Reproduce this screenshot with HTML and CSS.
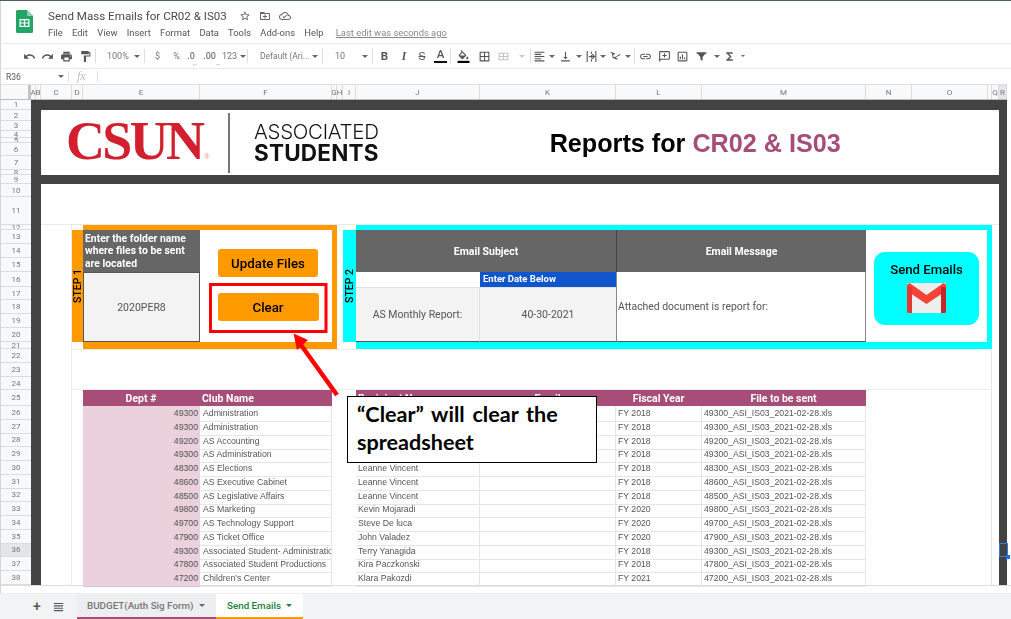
FILE: index.html
```html
<!DOCTYPE html>
<html lang="en">
<head>
<meta charset="utf-8">
<title>Send Mass Emails for CR02 &amp; IS03</title>
<link rel="stylesheet" href="styles.css">
</head>
<body>
<div class="app">
  <header class="titlebar">
    <svg class="sheets-logo" viewBox="0 0 17 23"><path fill="#23a566" d="M1.5 0H11l6 6v15.500a1.500 1.500 0 0 1-1.500 1.500h-14A1.500 1.500 0 0 1 0 21.500v-20A1.500 1.500 0 0 1 1.500 0z"/><path fill="#8ed1b1" d="M11 0l6 6h-6z"/><path fill="#fff" d="M3.500 9h10v8h-10zM4.700 10.200v2.200h3.200v-2.200zm4.400 0v2.200h3.200v-2.200zm-4.400 3.400v2.200h3.200v-2.200zm4.400 0v2.200h3.200v-2.200z" fill-rule="evenodd"/></svg>
    <div class="doc">
      <div class="doc-title">
        <span class="doc-name">Send Mass Emails for CR02 &amp; IS03</span>
        <svg class="ti star" viewBox="0 0 24 24"><path d="M22 9.240l-7.190-.62L12 2 9.190 8.630 2 9.240l5.460 4.730L5.820 21 12 17.270 18.180 21l-1.630-7.030L22 9.240zM12 15.400l-3.760 2.270 1-4.280-3.320-2.880 4.380-.38L12 6.100l1.710 4.040 4.380.38-3.320 2.880 1 4.280L12 15.400z"/></svg>
        <svg class="ti" viewBox="0 0 24 24"><path d="M20 6h-8l-2-2H4c-1.100 0-2 .9-2 2v12c0 1.100.9 2 2 2h16c1.100 0 2-.9 2-2V8c0-1.100-.9-2-2-2zm0 12H4V8h16v10zM11 17h2v-3h3v-2h-3V9h-2v3H8v2h3z"/></svg>
        <svg class="ti" viewBox="0 0 24 24"><path d="M19.350 10.040C18.670 6.590 15.640 4 12 4 9.110 4 6.600 5.640 5.350 8.040 2.340 8.360 0 10.910 0 14c0 3.310 2.690 6 6 6h13c2.760 0 5-2.240 5-5 0-2.640-2.050-4.780-4.650-4.960zM19 18H6c-2.210 0-4-1.790-4-4s1.790-4 4-4h.71C7.370 7.690 9.480 6 12 6c3.040 0 5.500 2.460 5.500 5.500v.5H19c1.660 0 3 1.340 3 3s-1.340 3-3 3zm-9-1l-3-3 1.400-1.400L10 14.200l4.600-4.600L16 11z"/></svg>
      </div>
      <nav class="menu">
        <span>File</span><span>Edit</span><span>View</span><span>Insert</span><span>Format</span><span>Data</span><span>Tools</span><span>Add-ons</span><span>Help</span>
        <span class="last-edit">Last edit was seconds ago</span>
      </nav>
    </div>
  </header>

  <div class="toolbar">
    <span class="t w18 start"><svg viewBox="0 0 24 24"><path d="M12.500 8c-2.650 0-5.050.99-6.900 2.600L2 7v9h9l-3.620-3.620c1.390-1.160 3.160-1.880 5.120-1.880 3.540 0 6.550 2.310 7.600 5.500l2.370-.78C21.080 11.030 17.150 8 12.500 8z"/></svg></span>
    <span class="t w19"><svg viewBox="0 0 24 24"><path d="M18.400 10.600C16.550 8.990 14.150 8 11.500 8c-4.650 0-8.580 3.030-9.960 7.220L3.900 16c1.050-3.190 4.050-5.500 7.600-5.500 1.950 0 3.730.72 5.120 1.880L13 16h9V7l-3.600 3.600z"/></svg></span>
    <span class="t w18"><svg viewBox="0 0 24 24"><path d="M19 8H5c-1.660 0-3 1.340-3 3v6h4v4h12v-4h4v-6c0-1.660-1.340-3-3-3zm-3 11H8v-5h8v5zm3-7c-.55 0-1-.45-1-1s.45-1 1-1 1 .45 1 1-.45 1-1 1zm-1-9H6v4h12V3z"/></svg></span>
    <span class="t w20"><svg viewBox="0 0 24 24"><path d="M18 4V3c0-.55-.45-1-1-1H5c-.55 0-1 .45-1 1v4c0 .55.45 1 1 1h12c.55 0 1-.45 1-1V6h1v4H9v11c0 .55.45 1 1 1h2c.55 0 1-.45 1-1v-9h8V4h-3z"/></svg></span>
    <i class="sep"></i>
    <span class="tx zoom-box">100%</span><span class="t w15"><i class="caret"></i></span>
    <i class="sep"></i>
    <span class="tx t w23">$</span><span class="tx t w15">%</span>
    <span class="tx t w14 dec">.0<small>←</small></span><span class="tx t w23 dec">.00<small>→</small></span>
    <span class="tx t w17">123</span><span class="t w9"><i class="caret"></i></span>
    <i class="sep"></i>
    <span class="tx font-box">Default (Ari...</span><span class="t w15"><i class="caret"></i></span>
    <i class="sep"></i>
    <span class="tx size-box">10</span><span class="t w15"><i class="caret"></i></span>
    <i class="sep"></i>
    <span class="t w21 fb">B</span><span class="t w18 fi">I</span><span class="t w18 fs">S</span>
    <span class="t w19 fa">A<i class="bar"></i></span>
    <i class="sep after-a"></i>
    <span class="t w23"><svg viewBox="0 0 24 24"><path d="M16.560 8.940L7.620 0 6.210 1.410l2.380 2.380-5.150 5.150c-.59.59-.59 1.540 0 2.120l5.500 5.500c.29.29.68.44 1.060.44s.77-.15 1.060-.44l5.500-5.500c.59-.58.59-1.530 0-2.120zM5.210 10L10 5.210 14.790 10H5.210zM19 11.500s-2 2.170-2 3.500c0 1.100.9 2 2 2s2-.9 2-2c0-1.330-2-3.500-2-3.500z"/><path fill="#000" d="M1 20h22v4H1z"/></svg></span>
    <span class="t w18"><svg viewBox="0 0 24 24"><path d="M3 3v18h18V3H3zm8 16H5v-6h6v6zm0-8H5V5h6v6zm8 8h-6v-6h6v6zm0-8h-6V5h6v6z"/></svg></span>
    <span class="t w21 dim"><svg viewBox="0 0 24 24"><path d="M3 5h18v14H3zm2 2v4h6V7zm8 0v4h6V7zM5 13v4h6v-4zm8 0v4h6v-4z" fill-rule="evenodd"/></svg></span>
    <span class="t w16 dim"><i class="caret"></i></span>
    <i class="sep"></i>
    <span class="t w15"><svg viewBox="0 0 24 24"><path d="M15 15H3v2h12v-2zm0-8H3v2h12V7zM3 13h18v-2H3v2zm0 8h18v-2H3v2zM3 3v2h18V3H3z"/></svg></span><span class="t w10"><i class="caret"></i></span>
    <span class="t w17"><svg viewBox="0 0 24 24"><path d="M16 13h-3V3h-2v10H8l4 4 4-4zM4 19v2h16v-2H4z"/></svg></span><span class="t w10"><i class="caret"></i></span>
    <span class="t w14"><svg viewBox="0 0 24 24"><path d="M3 2h2v20H3zM19 2h2v20h-2zM11 3h2v4h-2zM11 9h2v6h-2zM11 17h2v4h-2zM7 11h8l-2.500-2.500L14 7l5 5-5 5-1.500-1.500L15 13H7z"/></svg></span><span class="t w10"><i class="caret"></i></span>
    <span class="t w14"><svg viewBox="0 0 24 24"><path d="M3 3l8.500 3.500-1 2L8.400 7.700 7.500 12l3 1.200L21 7v2.200L12 14l4 2-1 2L7 14.800 5 5.600 3 5z"/></svg></span><span class="t w12"><i class="caret"></i></span>
    <i class="sep"></i>
    <span class="t w19"><svg viewBox="0 0 24 24"><path d="M3.900 12c0-1.710 1.390-3.100 3.100-3.100h4V7H7c-2.760 0-5 2.240-5 5s2.240 5 5 5h4v-1.900H7c-1.710 0-3.100-1.390-3.100-3.100zM8 13h8v-2H8v2zm9-6h-4v1.900h4c1.710 0 3.100 1.390 3.100 3.100s-1.390 3.100-3.100 3.100h-4V17h4c2.760 0 5-2.240 5-5s-2.240-5-5-5z"/></svg></span>
    <span class="t w18"><svg viewBox="0 0 24 24"><path d="M20 2H4c-1.100 0-2 .9-2 2v18l4-4h14c1.100 0 2-.9 2-2V4c0-1.100-.9-2-2-2zm0 14H5.200L4 17.200V4h16zM11 6h2v3h3v2h-3v3h-2v-3H8V9h3z"/></svg></span>
    <span class="t w18"><svg viewBox="0 0 24 24"><path d="M19 3H5c-1.100 0-2 .9-2 2v14c0 1.100.9 2 2 2h14c1.100 0 2-.9 2-2V5c0-1.100-.9-2-2-2zm0 16H5V5h14zM7 12h2v5H7zm4-4h2v9h-2zm4 6h2v3h-2z"/></svg></span>
    <span class="t w21"><svg viewBox="0 0 24 24"><path d="M3 4h18v3h-2l-5 6v7l-4-2v-5L5 7H3z"/></svg></span><span class="t w9"><i class="caret"></i></span>
    <span class="t w17"><svg viewBox="0 0 24 24"><path d="M18 4H6v2l6.500 6L6 18v2h12v-3h-7l5-5-5-5h7z"/></svg></span><span class="t w9"><i class="caret small"></i></span>
  </div>

  <div class="formula">
    <span class="cell-ref">R36</span><i class="caret"></i><i class="fsep"></i><span class="fx">fx</span><i class="fsep"></i>
  </div>

  <div class="colhead">
    <span class="corner"></span>
    <span>A</span><span>B</span><span>C</span><span>D</span><span>E</span><span>F</span><span>G</span><span>H</span><span>I</span><span>J</span><span>K</span><span>L</span><span>M</span><span>N</span><span>O</span><span></span><span>Q</span><span class="on">R</span>
  </div>

  <div class="sheet">
    <div class="rowhead">
      <span>1</span><span>2</span><span>3</span><span>4</span><span>5</span><span>6</span><span>7</span><span>8</span><span>9</span><span>10</span><span>11</span><span>12</span><span>13</span><span>14</span><span>15</span><span>16</span><span>17</span><span>18</span><span>19</span><span>20</span><span>21</span><span>22</span><span>23</span><span>24</span><span>25</span><span>26</span><span>27</span><span>28</span><span>29</span><span>30</span><span>31</span><span>32</span><span>33</span><span>34</span><span>35</span><span class="on">36</span><span>37</span><span>38</span>
    </div>

    <div class="canvas">
      <div class="dark d-top"></div>
      <div class="dark d-left"></div>
      <div class="dark d-right"></div>
      <div class="dark d-band"></div>
      <div class="blank-top"></div>
      <div class="blank-side"></div>
      <div class="blank-mid"></div>

      <div class="banner">
        <div class="csun">CSUN<sup>®</sup></div>
        <i class="divider"></i>
        <div class="assoc"><span class="assoc-a">ASSOCIATED</span><span class="assoc-s">STUDENTS</span></div>
        <h1 class="report">Reports for <em>CR02 &amp; IS03</em></h1>
      </div>

      <div class="frame1"></div>
      <div class="tab1"><span>STEP 1</span></div>
      <div class="prompt">Enter the folder name where files to be sent are located</div>
      <div class="folder">2020PER8</div>
      <div class="actions">
        <button class="btn btn-update">Update Files</button>
        <button class="btn btn-clear">Clear</button>
      </div>

      <div class="frame2"></div>
      <div class="tab2"><span>STEP 2</span></div>
      <div class="head head-subject">Email Subject</div>
      <div class="head head-message">Email Message</div>
      <div class="date-gap"></div>
      <div class="date-label">Enter Date Below</div>
      <div class="gray subject">AS Monthly Report:</div>
      <div class="gray date">40-30-2021</div>
      <div class="message">Attached document is report for:</div>
      <div class="send-cell">
        <button class="send">
          <span>Send Emails</span>
          <svg class="gmail" viewBox="0 0 39 30"><path fill="#eee" d="M0 0h39v30H0z"/><path fill="#f44336" d="M0 1.500L2.500 0 19.500 12 36.500 0 39 1.500V8L19.500 21 0 8z"/><path fill="#e53935" d="M0 4h5v26H1a1 1 0 0 1-1-1z"/><path fill="#c62828" d="M34 4h5v25a1 1 0 0 1-1 1h-4z"/></svg>
        </button>
      </div>

      <div class="table">
        <div class="tr th"><span class="c">Dept #</span><span>Club Name</span><i></i><span>Recipient Name</span><span class="c">Email</span><span class="c">Fiscal Year</span><span class="c">File to be sent</span></div>
        <div class="tr"><b>49300</b><span>Administration</span><i></i><span></span><span></span><span>FY 2018</span><span>49300_ASI_IS03_2021-02-28.xls</span></div>
        <div class="tr"><b>49300</b><span>Administration</span><i></i><span></span><span></span><span>FY 2018</span><span>49300_ASI_IS03_2021-02-28.xls</span></div>
        <div class="tr"><b>49200</b><span>AS Accounting</span><i></i><span></span><span></span><span>FY 2018</span><span>49200_ASI_IS03_2021-02-28.xls</span></div>
        <div class="tr"><b>49300</b><span>AS Administration</span><i></i><span></span><span></span><span>FY 2018</span><span>49300_ASI_IS03_2021-02-28.xls</span></div>
        <div class="tr"><b>48300</b><span>AS Elections</span><i></i><span>Leanne Vincent</span><span></span><span>FY 2018</span><span>48300_ASI_IS03_2021-02-28.xls</span></div>
        <div class="tr"><b>48600</b><span>AS Executive Cabinet</span><i></i><span>Leanne Vincent</span><span></span><span>FY 2018</span><span>48600_ASI_IS03_2021-02-28.xls</span></div>
        <div class="tr"><b>48500</b><span>AS Legislative Affairs</span><i></i><span>Leanne Vincent</span><span></span><span>FY 2018</span><span>48500_ASI_IS03_2021-02-28.xls</span></div>
        <div class="tr"><b>49800</b><span>AS Marketing</span><i></i><span>Kevin Mojaradi</span><span></span><span>FY 2020</span><span>49800_ASI_IS03_2021-02-28.xls</span></div>
        <div class="tr"><b>49700</b><span>AS Technology Support</span><i></i><span>Steve De luca</span><span></span><span>FY 2020</span><span>49700_ASI_IS03_2021-02-28.xls</span></div>
        <div class="tr"><b>47900</b><span>AS Ticket Office</span><i></i><span>John Valadez</span><span></span><span>FY 2020</span><span>47900_ASI_IS03_2021-02-28.xls</span></div>
        <div class="tr"><b>49300</b><span>Associated Student- Administration</span><i></i><span>Terry Yanagida</span><span></span><span>FY 2018</span><span>49300_ASI_IS03_2021-02-28.xls</span></div>
        <div class="tr"><b>47800</b><span>Associated Student Productions</span><i></i><span>Kira Paczkonski</span><span></span><span>FY 2018</span><span>47800_ASI_IS03_2021-02-28.xls</span></div>
        <div class="tr"><b>47200</b><span>Children's Center</span><i></i><span>Klara Pakozdi</span><span></span><span>FY 2021</span><span>47200_ASI_IS03_2021-02-28.xls</span></div>
      </div>
      <div class="blank-right"></div>
    </div>
  </div>

  <div class="sheet-foot"></div>

  <footer class="tabs">
    <span class="tab-tool plus">+</span>
    <svg class="tab-tool-icon" viewBox="0 0 12 10"><path d="M1 .5h10v1.300H1zM1 3.100h10v1.300H1zM1 5.700h10V7H1zM1 8.300h10v1.300H1z"/></svg>
    <div class="tab tab-budget">BUDGET(Auth Sig Form)<i class="caret"></i></div>
    <div class="tab tab-send">Send Emails<i class="caret"></i></div>
  </footer>

  <div class="selection"></div>
  <svg class="annot" viewBox="0 0 1011 619">
    <rect x="210.500" y="284.500" width="115.500" height="47" fill="none" stroke="#f00" stroke-width="3"/>
    <path d="M301 345L337 395" stroke="#f00" stroke-width="4.500" fill="none"/>
    <path d="M293.500 333.500L308 340 297 350z" fill="#f00"/>
  </svg>
  <div class="note">“Clear” will clear the spreadsheet</div>
</div>
</body>
</html>
```
FILE: styles.css
```css
:root {
  --cols: 5px 5px 31px 11px 117px 132px 5px 6px 13px 124px 136px 86px 164px 46px 76px 4px 7px 8px;
  --rows: 10px 11px 10px 7px 5px 13px 14px 5px 9px 13px 28px 5px 14px 14px 14px 15px 13px 14px 14px 14px 7px 14px 14px 13px 16px repeat(13, 13.75px);
  --line: #e6e6e6;
}
* { box-sizing: border-box; }
html, body { margin: 0; height: 100%; overflow: hidden; background: #fff; }
body { font-family: Roboto, "Liberation Sans", sans-serif; color: #444; }
button { font-family: inherit; border: 0; padding: 0; }
.app { position: relative; width: 1011px; height: 619px; display: flex; flex-direction: column; border-top: 1px solid #4a5d66; overflow: hidden; filter: blur(.3px); }

/* title */
.titlebar { height: 42px; flex: none; display: flex; border-left: 1px solid #d5d5d5; padding: 9px 0 0 15px; }
.sheets-logo { width: 17px; height: 23px; }
.doc { margin-left: 15px; margin-top: -1px; }
.doc-title { display: flex; align-items: center; height: 17px; margin-top: -2px; }
.doc-name { font-size: 11.600px; color: #4a4a4a; width: 179px; white-space: nowrap; }
.ti { width: 12px; height: 12px; fill: #666; margin-left: 8px; }
.ti.star { margin-left: 12px; }
.menu { display: flex; font-size: 9.400px; color: #555; margin-top: 3px; line-height: 12px; }
.menu span { margin-right: 9.300px; white-space: nowrap; }
.last-edit { margin-left: 3px; text-decoration: underline; color: #888; }

/* toolbar */
.toolbar { height: 26px; flex: none; display: flex; align-items: center; border-top: 1px solid #e8e8e8; border-bottom: 1px solid #e8e8e8; border-left: 1px solid #d5d5d5; padding-left: 19px; }
.t { flex: none; display: flex; align-items: center; justify-content: center; height: 16px; }
.t svg { width: 13px; height: 13px; fill: #555; }
.w9 { width: 9px; } .w10 { width: 10px; } .w12 { width: 12px; } .w14 { width: 14px; } .w15 { width: 15px; }
.w16 { width: 16px; } .w17 { width: 17px; } .w18 { width: 18px; } .w19 { width: 19px; } .w20 { width: 20px; }
.w21 { width: 21px; } .w23 { width: 23px; }
.sep { flex: none; width: 1px; height: 14px; margin: 0 1px 0 0; background: #ddd; }
.tx { font-size: 9px; color: #777; white-space: nowrap; flex: none; }
.zoom-box { width: 32px; padding-left: 10px; }
.font-box { width: 58px; padding-left: 11px; font-size: 8.500px; }
.size-box { width: 33px; padding-left: 11px; }
.caret { display: inline-block; width: 0; height: 0; border: 3px solid transparent; border-top: 3.500px solid #666; border-bottom: 0; }
.caret.small { border-width: 2px; border-top-width: 2.500px; border-bottom: 0; }
.dec { position: relative; font-weight: 500; }
.dec small { position: absolute; font-size: 6px; bottom: -3px; right: 0; }
.fb, .fi, .fs, .fa { font-size: 11.500px; color: #555; font-weight: 700; }
.fi { font-style: italic; font-family: "Liberation Serif", serif; }
.fs { text-decoration: line-through; font-weight: 400; }
.fa { flex-direction: column; font-weight: 500; line-height: 11px; }
.bar { display: block; width: 13px; height: 2.500px; background: #111; margin-top: 1px; }
.dim { opacity: .35; }

/* formula bar */
.formula { height: 15px; flex: none; display: flex; align-items: center; border-left: 1px solid #d5d5d5; padding-left: 5px; font-size: 8.500px; color: #555; }
.cell-ref { width: 52px; }
.fsep { width: 1px; height: 11px; background: #ddd; margin-left: 4px; }
.fx { font-family: "Liberation Serif", serif; font-style: italic; font-size: 12px; color: #bbb; width: 24px; padding-left: 8px; }

/* headers */
.colhead { height: 16px; flex: none; display: grid; grid-template-columns: 31px var(--cols); background: #f8f9fa; border-top: 1px solid #e0e0e0; border-bottom: 1px solid #bdbdbd; width: 1007px; font-size: 8px; color: #777; }
.colhead span { display: flex; align-items: center; justify-content: center; border-right: 1px solid #dcdcdc; overflow: hidden; }
.colhead .corner { border-right: 3px solid #c4c4c4; border-left: 1px solid #d5d5d5; }
.colhead .on { background: #e3e5e8; }
.sheet { flex: none; height: 485px; display: flex; }
.rowhead { width: 31px; flex: none; display: grid; grid-template-rows: var(--rows); background: #f8f9fa; font-size: 8px; color: #777; border-left: 1px solid #d5d5d5; }
.rowhead span { display: flex; align-items: center; justify-content: center; border-bottom: 1px solid #dcdcdc; overflow: hidden; }
.rowhead .on { background: #e3e5e8; }

/* canvas */
.canvas { width: 976px; display: grid; grid-template-columns: var(--cols); grid-template-rows: var(--rows); }
.dark { background: #434343; }
.d-top { grid-column: 1 / 19; grid-row: 1; }
.d-left { grid-column: 1 / 3; grid-row: 1 / 39; }
.d-right { grid-column: 18; grid-row: 1 / 39; }
.d-band { grid-column: 3 / 18; grid-row: 9; }
.blank-top { grid-column: 3 / 18; grid-row: 10 / 12; border-bottom: 1px solid #eaeaea; }
.blank-side { grid-column: 3; grid-row: 12 / 39; border-right: 1px solid #ececec; }
.blank-mid { grid-column: 4 / 17; grid-row: 22 / 25; border-top: 1px solid #ececec; border-bottom: 1px solid #ececec; border-right: 1px solid #e6e6e6; }
.blank-right { grid-column: 14 / 17; grid-row: 25 / 39; border-right: 1px solid #e6e6e6; }

/* banner */
.banner { grid-column: 3 / 18; grid-row: 2 / 9; background: #fff; display: flex; align-items: center; padding-left: 25px; }
.csun { width: 162px; font-family: "Liberation Serif", serif; font-weight: 700; font-size: 54px; letter-spacing: -2.700px; color: #d2202f; line-height: 50px; white-space: nowrap; margin-top: 13px; }
.csun sup { font-family: "Liberation Sans", sans-serif; font-size: 7px; font-weight: 400; letter-spacing: 0; color: #e88; vertical-align: baseline; margin-left: 2px; }
.divider { width: 1.500px; height: 60px; background: #777; }
.assoc { margin-left: 24.500px; display: flex; flex-direction: column; color: #111; white-space: nowrap; }
.assoc-a { font-family: Inter, sans-serif; font-weight: 300; font-size: 20.500px; line-height: 21px; letter-spacing: -.3px; }
.assoc-s { font-family: Inter, sans-serif; font-weight: 700; font-size: 22.500px; line-height: 22px; letter-spacing: .2px; }
.report { margin: 0 0 0 171px; font-family: "Liberation Sans", sans-serif; font-size: 25.200px; font-weight: 700; color: #000; white-space: nowrap; padding-top: 2px; }
.report em { font-style: normal; color: #a64d79; }

/* step 1 */
.frame1 { grid-column: 5 / 8; grid-row: 12 / 22; background: #f90; }
.tab1, .tab2 { grid-row: 13 / 21; display: flex; align-items: center; justify-content: center; font-size: 10.500px; font-weight: 500; color: #000; }
.tab1 { grid-column: 4; background: #f90; }
.tab2 { grid-column: 9; background: #0ff; }
.tab1 span, .tab2 span { writing-mode: vertical-rl; transform: rotate(180deg); }
.prompt { grid-column: 5; grid-row: 13 / 16; background: #666; color: #fff; font-size: 10.400px; font-weight: 700; line-height: 12.500px; padding: 2.500px 8px 0 2px; }
.folder { grid-column: 5; grid-row: 16 / 21; background: #f3f3f3; border: 1px solid #555; display: flex; align-items: center; justify-content: center; font-size: 10.500px; color: #555; }
.actions { grid-column: 6; grid-row: 13 / 21; background: #fff; display: flex; flex-direction: column; align-items: center; padding: 19px 0 0 4px; }
.btn { background: #f90; color: #000; border-radius: 3px; font-weight: 500; font-size: 13.300px; display: block; }
.btn-update { width: 100px; height: 28px; }
.btn-clear { width: 101px; height: 28px; margin-top: 16px; }

/* step 2 */
.frame2 { grid-column: 10 / 17; grid-row: 12 / 22; background: #0ff; }
.head { grid-row: 13 / 16; background: #666; color: #fff; font-weight: 700; font-size: 10.500px; display: flex; align-items: center; justify-content: center; }
.head-subject { grid-column: 10 / 12; }
.head-message { grid-column: 12 / 14; border-left: 1px solid #444; }
.date-gap { grid-column: 10; grid-row: 16; background: #fff; }
.date-label { grid-column: 11; grid-row: 16; background: #1155cc; color: #fff; font-size: 9.500px; font-weight: 700; padding-left: 3px; line-height: 14px; white-space: nowrap; }
.gray { grid-row: 17 / 21; background: #f3f3f3; display: flex; align-items: center; justify-content: center; color: #555; font-size: 10.500px; border-top: 1px solid #e2e2e2; border-bottom: 1px solid #555; }
.subject { grid-column: 10; border-right: 1px solid #e2e2e2; }
.date { grid-column: 11; }
.message { grid-column: 12 / 14; grid-row: 16 / 21; background: #fff; display: flex; align-items: center; font-size: 10.400px; color: #555; padding-left: 1px; border-left: 1px solid #888; border-right: 1px solid #888; border-bottom: 1px solid #555; }
.send-cell { grid-column: 14 / 16; grid-row: 13 / 21; background: #fff; display: flex; align-items: center; justify-content: center; padding-top: 5px; margin-right: 1px; }
.send { width: 105px; height: 73px; background: #0ff; border-radius: 11px; color: #000; font-weight: 500; font-size: 13.200px; display: flex; flex-direction: column; align-items: center; }
.send span { margin-top: 10px; line-height: 15px; }
.gmail { width: 39px; height: 30px; margin-top: 6px; }

/* table */
.table { grid-column: 5 / 14; grid-row: 25 / 39; display: grid; grid-template-rows: 16px repeat(13, 13.75px); font-family: "Liberation Sans", sans-serif; font-size: 8.700px; color: #555; }
.tr { display: grid; grid-template-columns: 117px 132px 24px 124px 136px 86px 164px; line-height: 15px; }
.tr > span { overflow: hidden; white-space: nowrap; padding-left: 3px; border-right: 1px solid var(--line); border-bottom: 1px solid var(--line); }
.tr > span:nth-child(n+4) { padding-left: 2px; }
.tr > b { font-weight: 400; text-align: right; padding-right: 2px; background: #ead1dc; border-bottom: 1px solid #d8c0cc; }
.tr > i { background: #fff; }
.th { font-family: Roboto, sans-serif; font-size: 10.500px; font-weight: 700; color: #fff; line-height: 17px; }
.tr.th > span { background: #a64d79; border-color: #a64d79; padding-left: 2px; }
.tr.th > .c { text-align: center; padding-left: 0; }

/* footer */
.sheet-foot { height: 8px; flex: none; border-top: 1px solid #ddd; border-left: 1px solid #d5d5d5; }
.tabs { flex: 1; display: flex; align-items: stretch; background: #f1f3f4; border-top: 1px solid #eee; padding-left: 32px; }
.plus { width: 10px; font-size: 14px; line-height: 24px; color: #555; text-align: center; font-weight: 500; }
.tab-tool-icon { width: 11px; height: 10px; fill: #555; margin: 8px 0 0 11px; }
.tab { display: flex; align-items: center; font-size: 9.800px; font-weight: 500; white-space: nowrap; border-bottom: 2px solid; padding-bottom: 1px; }
.tab-budget { width: 139px; margin-left: 13px; padding-left: 10px; background: #eceef0; color: #777; border-color: #a64d79; }
.tab-budget .caret { margin-left: 6px; }
.tab-send { width: 87px; padding-left: 11px; background: #fff; color: #188038; border-color: #f90; }
.tab-send .caret { margin-left: 5px; border-top-color: #188038; }

/* overlays */
.selection { position: absolute; left: 999px; top: 542px; width: 9px; height: 14px; border: 1.500px solid #2b7de9; }
.selection::after { content: ""; position: absolute; right: -3px; bottom: -3px; width: 4px; height: 4px; background: #1a73e8; }
.annot { position: absolute; left: 0; top: -1px; width: 1011px; height: 619px; pointer-events: none; }
.note { position: absolute; left: 347px; top: 395px; width: 250px; height: 67px; background: #fff; border: 1px solid #000; padding: 3px 9px; font-family: Lato, sans-serif; font-weight: 700; font-size: 21.600px; word-spacing: 2.500px; line-height: 28px; color: #000; }
```
